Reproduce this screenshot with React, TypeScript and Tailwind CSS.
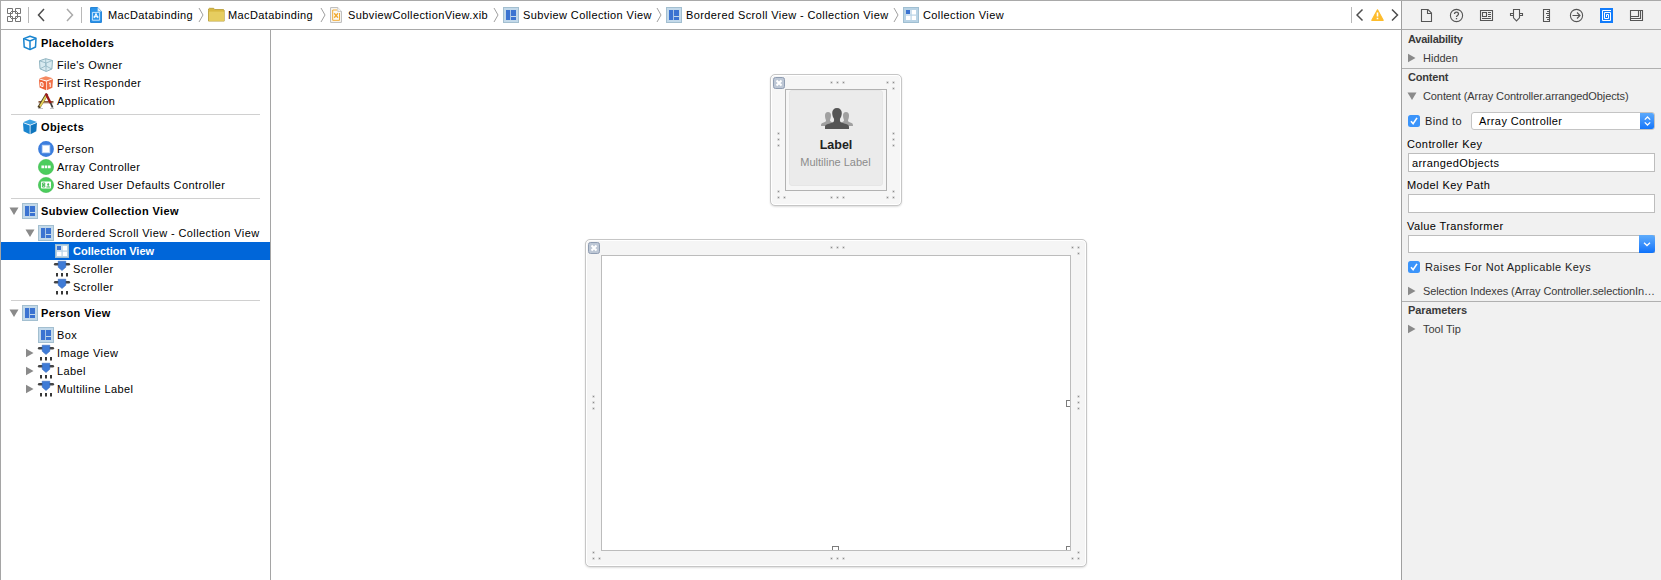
import React from "react";

type IconName =
  | "cubeOutline" | "owner" | "responder" | "app" | "cube" | "person" | "array" | "defaults"
  | "view" | "collection" | "scroller";

function ViewIcon() {
  return (
    <svg width="16" height="16" viewBox="0 0 16 16" className="shrink-0">
      <rect x=".5" y=".5" width="15" height="15" fill="#c3d9ea" stroke="#a3bfd0" />
      <rect x="3" y="3" width="4.200" height="10" fill="#3b73d1" />
      <rect x="8" y="3" width="5" height="6" fill="#3b73d1" />
      <rect x="8" y="10" width="5" height="3" fill="#3b73d1" />
    </svg>
  );
}

function CollectionIcon({ size = 14 }: { size?: 14 | 16 }) {
  const a = size === 16 ? 3 : 2;
  const b = size === 16 ? 9 : 8;
  return (
    <svg width={size} height={size} viewBox={`0 0 ${size} ${size}`} className="shrink-0">
      <rect x=".5" y=".5" width={size - 1} height={size - 1} fill="#b9d3e5" stroke="#a0bfd2" />
      <rect x={a} y={a} width="4.500" height="4.500" fill="#e4eefa" />
      <rect x={a} y={a} width="4" height="4" fill="#3b73d1" />
      <rect x={b - 0.3} y={a} width="4.300" height="4.500" fill="#fff" />
      <rect x={a} y={b - 0.3} width="4.500" height="4.300" fill="#fff" />
      <rect x={b - 0.3} y={b - 0.3} width="4.300" height="4.300" fill="#fff" />
    </svg>
  );
}

function TreeIcon({ name }: { name: IconName }) {
  if (name === "view") return <ViewIcon />;
  if (name === "collection")
    return (
      <span className="flex w-4 shrink-0 justify-center">
        <CollectionIcon />
      </span>
    );
  return (
    <svg width="16" height="16" viewBox="0 0 16 16" className="shrink-0 overflow-visible">
      {name === "cubeOutline" && (
        <g fill="none" stroke="#1a85cf" strokeWidth="1.5" strokeLinejoin="round">
          <path d="M1.7 3.6 8 1.2l6 2-.5 8.8L8 14.6 2.2 12z" />
          <path d="M1.7 3.6 8 6l6-2.6M8 6v8.4" />
        </g>
      )}
      {name === "cube" && (
        <g>
          <path d="M1 3.3 7.8.5 15 3 8.3 5.7z" fill="#3aa0e2" />
          <path d="M1 4 7.7 6.4v8.8L1.6 12.3z" fill="#1a85cf" />
          <path d="M8.5 6.4 15 3.7l-.7 8.6-5.8 2.9z" fill="#0f75bd" />
        </g>
      )}
      {name === "owner" && (
        <g fill="#d8eaf0" stroke="#8fb4c1" strokeLinejoin="round">
          <path d="M1.5 3.8 7.7 1.7l6.8 1.8-.6 8.5-5.6 2.5L2 11.8z" />
          <path d="M1.5 3.8 8 6l6.5-2.5M8 6v8.3M2 11.8l5.8-3 6 3.2M7.7 1.7v7" fill="none" strokeWidth=".8" />
        </g>
      )}
      {name === "responder" && (
        <g>
          <path d="M1 3.6 7.8 1.3l7 1.9-6.4 2.4z" fill="#f58a61" />
          <path d="M1 4.2 8 6.4v8.8l-6.4-2.6z" fill="#ee6237" />
          <path d="M8.7 6.4 15 4l-.6 8.7-5.7 2.5z" fill="#f07048" />
          <path d="M2.7 7.4 5 8v3.6l-2.300-.7zM11 8.6l1.200-.8v4.200" fill="none" stroke="#fff" strokeWidth="1" />
        </g>
      )}
      {name === "app" && (
        <g fill="none">
          <path d="M.5 8.500h15M.5 9.700h15" stroke="#8a5a3c" strokeWidth="1.100" />
          <path d="M.7 14.8 9 1" stroke="#4a3b20" strokeWidth="3" />
          <path d="M2 13.400 8.400 2.600" stroke="#e6d25a" strokeWidth="1.900" />
          <path d="m7.800.6 4.900 9.600" stroke="#9c1a1c" strokeWidth="2.400" />
          <path d="m12.600 10 2 4.500" stroke="#3d3d3d" strokeWidth="1.800" />
          <path d="M0 15.500h5m7 0h4" stroke="#b5b5b5" strokeWidth=".8" />
        </g>
      )}
      {name === "person" && (
        <g>
          <circle cx="8" cy="8" r="7.9" fill="#3b7ddd" />
          <rect x="4.200" y="4.200" width="7.600" height="7.600" fill="#fff" stroke="#bcd4f5" strokeWidth=".8" />
        </g>
      )}
      {name === "array" && (
        <g>
          <circle cx="8" cy="8" r="7.600" fill="#4ccd5d" stroke="#3cbb4e" strokeWidth=".6" />
          <path d="M3.400 6.600h2.600v2.600H3.400zM6.700 6.600h2.600v2.600H6.700zM10 6.600h2.600v2.600H10z" fill="#fff" />
        </g>
      )}
      {name === "defaults" && (
        <g>
          <circle cx="8" cy="8" r="7.600" fill="#4ccd5d" stroke="#3cbb4e" strokeWidth=".6" />
          <rect x="3" y="4.400" width="10" height="7.200" rx=".8" fill="#fff" />
          <path d="M4.400 6h2.400v1.600H4.400zM4.400 8.400h2.400V10H4.400zM8.400 10h3.800M10.200 6v3.600M9.200 7.600h2" fill="none" stroke="#35b548" strokeWidth=".9" />
        </g>
      )}
      {name === "scroller" && (
        <g>
          <path d="M1.200 3.200h13.600" stroke="#454545" strokeWidth="2.600" strokeLinecap="round" />
          <path d="M4.200.2h7.600v6L8 9.600 4.200 6.200z" fill="#3f7bd6" stroke="#2d62b8" strokeWidth=".5" />
          <path d="M2 12h2v3.500H2zM7 12h2v3.500H7zM12 12h2v3.500h-2z" fill="#383838" />
        </g>
      )}
    </svg>
  );
}

function Triangle({ open }: { open: boolean }) {
  return (
    <svg width="10" height="10" viewBox="0 0 10 10" className="shrink-0" fill="#8a8a8a">
      {open ? <path d="M.5 1.500h9L5 9z" /> : <path d="M1 .7v8.600L8.500 5z" />}
    </svg>
  );
}

type RowData = { icon: IconName; text: string; level?: number; arrow?: "open" | "closed"; selected?: boolean };

function TreeRow({ icon, text, level = 1, arrow, selected }: RowData) {
  return (
    <div
      className={`flex h-[18px] items-center whitespace-nowrap ${level === 2 ? "pl-[37px]" : "pl-[21px]"} ${
        selected ? "bg-[#0066d9] font-bold text-white" : "text-black"
      }`}
    >
      <span className="flex w-4 shrink-0 items-center pl-[3px]">{arrow && <Triangle open={arrow === "open"} />}</span>
      <TreeIcon name={icon} />
      <span className={`ml-[3px] ${selected ? "tracking-[0px]" : "tracking-[0.4px]"}`}>{text}</span>
    </div>
  );
}

function Group({ title, icon, arrow, rows }: { title: string; icon: IconName; arrow?: boolean; rows: RowData[] }) {
  return (
    <section className="pb-1">
      <div className="mb-px flex h-6 items-center pl-2 font-bold">
        <span className="w-[13px] shrink-0">{arrow && <Triangle open />}</span>
        <TreeIcon name={icon} />
        <span className="ml-[3px] tracking-[0.4px]">{title}</span>
      </div>
      {rows.map((r, i) => (
        <TreeRow key={i} {...r} />
      ))}
    </section>
  );
}

const Separator = () => <div className="mx-[10px] h-px bg-[#d0d0d0]" />;

function Sidebar() {
  return (
    <nav className="w-[271px] shrink-0 border-r border-l border-[#a5a5a5] bg-white pt-px">
      <Group
        title="Placeholders"
        icon="cubeOutline"
        rows={[
          { icon: "owner", text: "File's Owner" },
          { icon: "responder", text: "First Responder" },
          { icon: "app", text: "Application" },
        ]}
      />
      <Separator />
      <Group
        title="Objects"
        icon="cube"
        rows={[
          { icon: "person", text: "Person" },
          { icon: "array", text: "Array Controller" },
          { icon: "defaults", text: "Shared User Defaults Controller" },
        ]}
      />
      <Separator />
      <Group
        title="Subview Collection View"
        icon="view"
        arrow
        rows={[
          { icon: "view", text: "Bordered Scroll View - Collection View", arrow: "open" },
          { icon: "collection", text: "Collection View", level: 2, selected: true },
          { icon: "scroller", text: "Scroller", level: 2 },
          { icon: "scroller", text: "Scroller", level: 2 },
        ]}
      />
      <Separator />
      <Group
        title="Person View"
        icon="view"
        arrow
        rows={[
          { icon: "view", text: "Box" },
          { icon: "scroller", text: "Image View", arrow: "closed" },
          { icon: "scroller", text: "Label", arrow: "closed" },
          { icon: "scroller", text: "Multiline Label", arrow: "closed" },
        ]}
      />
    </nav>
  );
}

function Crumb({ icon, text, width, iconWidth, last }: { icon: React.ReactNode; text: string; width: string; iconWidth: string; last?: boolean }) {
  return (
    <div className={`flex shrink-0 items-center whitespace-nowrap ${width}`}>
      <span className={`flex shrink-0 items-center justify-start ${iconWidth}`}>{icon}</span>
      <span className="w-0 grow tracking-[0.4px]">{text}</span>
      {!last && (
        <svg width="6" height="16" viewBox="0 0 6 16" className="mr-1 shrink-0" fill="none" stroke="#a0a0a0">
          <path d="M1 1 5 8 1 15" />
        </svg>
      )}
    </div>
  );
}

function DocIcon({ kind }: { kind: "project" | "xib" }) {
  const project = kind === "project";
  return (
    <svg width="12" height="16" viewBox="0 0 12 16" className="shrink-0">
      <path
        d="M.6.6h7.200l3.600 3.800v11H.6z"
        fill={project ? "#2c94ea" : "#fcfaf5"}
        stroke={project ? "#1b7fd6" : "#b9b9b9"}
        strokeWidth="1"
      />
      <path d="M7.800.6v3.800h3.600" fill="#fff" stroke={project ? "#7dbcf0" : "#b9b9b9"} strokeWidth=".8" />
      {project ? (
        <g>
          <path d="M2.400 5.400h7.200v7.800H2.400z" fill="none" stroke="#d9edff" strokeWidth=".9" />
          <path d="M4 11 6 6.800 8 11M3.600 9.700h4.800" stroke="#fff" strokeWidth="1.100" fill="none" />
        </g>
      ) : (
        <g fill="none" stroke="#f0ab35">
          <path d="M7 3H2.700v10.300h6.800V6" />
          <path d="m4.200 6.300 3.800 4.400M8 6.300l-3.800 4.400" strokeWidth="1.400" />
        </g>
      )}
    </svg>
  );
}

function FolderIcon() {
  return (
    <svg width="17" height="16" viewBox="0 0 17 16" className="shrink-0">
      <path d="M.5 3.200V2l.8-.7h4.400l1 1.200h8.800l.7.8v10.800H.5z" fill="#d9b941" stroke="#b59a35" strokeWidth=".8" />
      <path d="M1 4.600h15v9.300H1z" fill="#e6cd60" />
    </svg>
  );
}

function Chevron({ d, color }: { d: string; color: string }) {
  return (
    <svg width="8" height="14" viewBox="0 0 8 14" className="shrink-0" fill="none" stroke={color} strokeWidth="1.500">
      <path d={d} />
    </svg>
  );
}

function JumpBar() {
  return (
    <div className="flex h-[29px] w-[1401px] shrink-0 items-center border-b border-l border-[#a9a9a9] bg-white">
      <svg width="14" height="14" viewBox="0 0 14 14" className="ml-[6px] shrink-0" fill="none" stroke="#757575">
        <path d="M.5.5h5v5h-5zM8.500.5h5v5h-5zM.5 8.500h5v5h-5zM8.500 8.500h5v5h-5zM4 3.500h6M4 10.500h6M3.500 4v6M10.500 4v6" />
      </svg>
      <div className="ml-[7px] h-4 w-px bg-[#b8b8b8]" />
      <div className="ml-2"><Chevron d="M7 1 1.500 7 7 13" color="#4d4d4d" /></div>
      <div className="ml-[21px]"><Chevron d="M1 1l5.500 6L1 13" color="#aaaaaa" /></div>
      <div className="mr-2 ml-[7px] h-4 w-px bg-[#b8b8b8]" />
      <div className="flex grow items-center">
        <Crumb width="w-[118px]" iconWidth="w-[18px]" icon={<DocIcon kind="project" />} text="MacDatabinding" />
        <Crumb width="w-[122px]" iconWidth="w-5" icon={<FolderIcon />} text="MacDatabinding" />
        <Crumb width="w-[173px]" iconWidth="w-[18px]" icon={<DocIcon kind="xib" />} text="SubviewCollectionView.xib" />
        <Crumb width="w-[163px]" iconWidth="w-5" icon={<ViewIcon />} text="Subview Collection View" />
        <Crumb width="w-[237px]" iconWidth="w-5" icon={<ViewIcon />} text="Bordered Scroll View - Collection View" />
        <Crumb width="w-[120px]" iconWidth="w-5" icon={<CollectionIcon size={16} />} text="Collection View" last />
      </div>
      <div className="h-4 w-px bg-[#b8b8b8]" />
      <div className="flex w-[49px] items-center pl-1">
        <svg width="8" height="14" viewBox="0 0 8 14" fill="none" stroke="#4d4d4d" strokeWidth="1.500"><path d="M6.500 1.500 1 7l5.500 5.500" /></svg>
        <svg width="13" height="12" viewBox="0 0 13 12" className="ml-[7px]">
          <path d="M6.500.8 12.200 11.300H.8z" fill="#fdbc2c" stroke="#fdbc2c" strokeWidth="1.200" strokeLinejoin="round" />
          <path d="M6.500 3.500v4M6.500 8.800v1.400" stroke="#fff" strokeWidth="1.600" />
        </svg>
        <svg width="8" height="14" viewBox="0 0 8 14" className="ml-[7px]" fill="none" stroke="#4d4d4d" strokeWidth="1.500"><path d="M1 1.500 6.500 7 1 12.500" /></svg>
      </div>
    </div>
  );
}

function Grips({ points }: { points: number[][] }) {
  return (
    <svg className="pointer-events-none absolute -top-px -left-px h-[calc(100%+2px)] w-[calc(100%+2px)]">
      {points.map(([x, y], i) => (
        <g key={i}>
          <rect x={x - 1} y={y - 1} width="3" height="3" rx="1" fill="#dadada" />
          <rect x={x} y={y} width="1" height="1" fill="#8c8c8c" />
        </g>
      ))}
    </svg>
  );
}

function gripPoints(cx: number, cy: number, left: number, top: number, right: number, bottom: number) {
  return [
    [cx - 6, top], [cx, top], [cx + 6, top],
    [cx - 6, bottom], [cx, bottom], [cx + 6, bottom],
    [left, cy - 6], [left, cy], [left, cy + 6],
    [right, cy - 6], [right, cy], [right, cy + 6],
    [right - 6, top], [right, top], [right, top + 6],
    [right - 6, bottom], [right, bottom], [right, bottom - 6],
    [left + 6, bottom], [left, bottom], [left, bottom - 6],
  ];
}

function CloseBadge() {
  return (
    <svg width="12" height="12" viewBox="0 0 12 12" className="absolute top-[2px] left-[2px]">
      <rect x=".5" y=".5" width="11" height="11" rx="2" fill="#bdc7d5" stroke="#8f9db2" />
      <path d="m3.500 3.500 5 5M8.500 3.500l-5 5" stroke="#fff" strokeWidth="2" />
    </svg>
  );
}

function People() {
  return (
    <svg width="32" height="22" viewBox="0 0 32 22" className="ml-[2px] shrink-0">
      <g fill="#a0a0a0">
        <path d="M7 4c2 0 3 1.400 3 3.500S9.200 11 9 12.200c0 1 1 1.500 3 2.300V18H0c0-2 .3-2.600 2-3.200 2.200-.8 3-1.200 3-2.600-.5-1-1-2.700-1-4.700S5 4 7 4z" />
        <path d="M25 4c-2 0-3 1.400-3 3.500s.8 3.500 1 4.700c0 1-1 1.500-3 2.300V18h12c0-2-.3-2.600-2-3.200-2.200-.8-3-1.200-3-2.600.5-1 1-2.700 1-4.700S27 4 25 4z" />
      </g>
      <path d="M16 0c3 0 4.800 2 4.800 5 0 2.600-1 4.500-1.800 5.800-.3 2.400.2 3.400 2 4 4.500 1.400 7 1.600 7 4.200v2H4v-2c0-2.600 2.500-2.800 7-4.200 1.800-.6 2.300-1.600 2-4C12.200 9.500 11.200 7.600 11.200 5c0-3 1.800-5 4.800-5z" fill="#555" />
    </svg>
  );
}

function Canvas() {
  return (
    <main className="flex grow flex-col items-center bg-white pt-[44px]">
      <div className="relative h-[132px] w-[132px] rounded-[5px] border border-[#c6c6c6] bg-[#f6f6f6] p-[14px] shadow-[inset_0_0_0_1px_#fff,0_1px_2px_#0002]">
        <div className="flex h-[102px] w-[102px] justify-center border border-[#b2b2b2] bg-[#f6f6f6]">
          <div className="flex h-24 w-[94px] flex-col items-center rounded-[3px] border border-[#e6e6e6] bg-[#ebebeb] pt-[17px]">
            <People />
            <div className="mt-[7px] text-[12.5px] leading-4 font-bold text-[#222]">Label</div>
            <div className="mt-px mr-px text-[11px] leading-4 whitespace-nowrap text-[#8b8b8b]">Multiline Label</div>
          </div>
        </div>
        <Grips points={gripPoints(67, 65, 8, 8, 123, 123)} />
        <CloseBadge />
      </div>
      <div className="relative mt-[33px] h-[328px] w-[502px] rounded-[5px] border border-[#c6c6c6] bg-[#f5f5f5] p-[15px] shadow-[inset_0_0_0_1px_#fff,0_1px_2px_#0002]">
        <div className="relative h-[296px] w-[470px] overflow-hidden border border-[#bcbcbc] bg-white">
          <span className="absolute top-[144px] -right-[3px] size-[7px] border border-[#7c7c7c]" />
          <span className="absolute -bottom-[3px] left-[230px] size-[7px] border border-[#7c7c7c]" />
          <span className="absolute -right-[3px] -bottom-[3px] size-[7px] border border-[#7c7c7c]" />
        </div>
        <Grips points={gripPoints(252, 163, 8, 8, 493, 319)} />
        <CloseBadge />
      </div>
    </main>
  );
}

function InspectorTabs() {
  const c = "flex w-[30px] items-center justify-center";
  const svg = { width: 15, height: 15, viewBox: "0 0 15 15", fill: "none", stroke: "#555", strokeWidth: 1.1, className: "relative left-[0.5px]" };
  return (
    <div className="flex h-[29px] items-center border-b border-[#a9a9a9] pl-[9px]">
      <span className={c}><svg {...svg}><path d="M2.500 1.500h6.500l3.500 3.500v8.500h-10zM8.500 1.500V5.500h4" /></svg></span>
      <span className={c}><svg {...svg}><circle cx="7.500" cy="7.500" r="6.100" /><path d="M5.500 6c0-2.600 4-2.600 4 0 0 1.500-2 1.500-2 3M7.500 10v1.300" strokeWidth="1.300" /></svg></span>
      <span className={c}><svg {...svg}><path d="M1.500 2.500h12v10h-12zM3.500 4.500h4v4h-4zM9 4.500h3M9 6.500h3M9 8.500h3M3 10.500h9" /></svg></span>
      <span className={c}><svg {...svg}><path d="M4.500 1.500h6v8.300l-3 3.200-3-3.200zM4.500 5.500h-3v2h3M10.500 5.500h3v2h-3" /></svg></span>
      <span className={c}><svg {...svg}><path d="M4.500 1.500h6v12h-6zM10.500 3.500h-2.500M10.500 5.500h-3.500M10.500 7.500h-2.500M10.500 9.500h-3.500M10.500 11.500h-2.500" /></svg></span>
      <span className={c}><svg {...svg}><circle cx="7.500" cy="7.500" r="6.100" /><path d="M3.500 7.500h7.500M8 4.500l3 3-3 3" /></svg></span>
      <span className={c}>
        <span className="flex h-[15px] w-[13px] items-center justify-center bg-[#127cfb]">
          <svg width="13" height="15" viewBox="0 0 13 15" fill="none" stroke="#fff">
            <path d="M11 2.500H2.500v10h8v-8h-6v6h4v-4H6.500v2.500" />
          </svg>
        </span>
      </span>
      <span className={c}><svg {...svg}><path d="M1.500 2.500h12v10h-12zM1.500 8.500h8v-6M1.500 10.500h10v-8" /></svg></span>
    </div>
  );
}

function Checkbox() {
  return (
    <svg width="12" height="12" viewBox="0 0 12 12" className="shrink-0">
      <rect width="12" height="12" rx="2.500" fill="#3b94fa" />
      <path d="m3 6.300 2.100 2.400L9 2.900" fill="none" stroke="#fff" strokeWidth="1.600" />
    </svg>
  );
}

function Disclosure({ text, open = false, tracking }: { text: string; open?: boolean; tracking: string }) {
  return (
    <div className="flex h-[18px] items-center text-[#3a3a3a]">
      <span className="-ml-px w-4 shrink-0"><Triangle open={open} /></span>
      <span className={`whitespace-nowrap ${tracking}`}>{text}</span>
    </div>
  );
}

function Inspector() {
  return (
    <aside className="flex w-[260px] shrink-0 flex-col border-l border-[#a0a0a0] bg-[#f1f1f1]">
      <InspectorTabs />
      <div className="flex h-[38px] flex-col pl-[6px]">
        <div className="h-[19px] leading-[19px] font-bold tracking-[-0.25px] text-[#3a3a3a]">Availability</div>
        <Disclosure text="Hidden" tracking="tracking-[0px]" />
      </div>
      <div className="h-px bg-[#b0b0b0]" />
      <div className="flex h-[232px] flex-col px-[6px]">
        <div className="h-[18px] leading-4 font-bold tracking-[-0.2px] text-[#3a3a3a]">Content</div>
        <Disclosure text="Content (Array Controller.arrangedObjects)" open tracking="tracking-[-0.1px]" />
        <div className="mt-[7px] flex h-[18px] items-center">
          <Checkbox />
          <span className="ml-[5px] w-[46px] tracking-[0.4px] text-[#1c1c1c]">Bind to</span>
          <div className="flex h-[18px] grow items-center overflow-hidden rounded-[3px] border border-[#c4c4c4] bg-white">
            <span className="grow pl-[7px] tracking-[0.4px]">Array Controller</span>
            <span className="-my-px -mr-px flex h-[18px] w-[15px] items-center justify-center bg-linear-to-b from-[#5facfb] to-[#0a72fb]">
              <svg width="7" height="10" viewBox="0 0 7 10" fill="none" stroke="#fff" strokeWidth="1.300"><path d="M.8 3.600 3.500 1l2.700 2.600M.8 6.400 3.500 9l2.700-2.600" /></svg>
            </span>
          </div>
        </div>
        <div className="mt-[6px] -ml-px h-[17px] leading-[17px] tracking-[0.4px]">Controller Key</div>
        <div className="h-[19px] border border-[#bdbdbd] bg-white pl-[3px] leading-[18px] tracking-[0.4px]">arrangedObjects</div>
        <div className="mt-[5px] -ml-px h-[17px] leading-[17px] tracking-[0.4px]">Model Key Path</div>
        <div className="h-[19px] border border-[#bdbdbd] bg-white" />
        <div className="mt-[5px] -ml-px h-[17px] leading-[17px] tracking-[0.4px]">Value Transformer</div>
        <div className="flex h-[18px] justify-end border border-[#bdbdbd] bg-white">
          <span className="-my-px -mr-px flex h-[18px] w-4 items-center justify-center rounded-r-[3px] bg-linear-to-b from-[#5facfb] to-[#0a72fb]">
            <svg width="8" height="5" viewBox="0 0 8 5" fill="none" stroke="#fff" strokeWidth="1.300"><path d="m1 .8 3 2.800L7 .8" /></svg>
          </span>
        </div>
        <div className="mt-[6px] flex h-4 items-center">
          <Checkbox />
          <span className="ml-[5px] tracking-[0.4px] text-[#1c1c1c]">Raises For Not Applicable Keys</span>
        </div>
        <div className="mt-[7px]">
          <Disclosure text="Selection Indexes (Array Controller.selectionIn…" tracking="tracking-[-0.1px]" />
        </div>
      </div>
      <div className="h-px bg-[#b0b0b0]" />
      <div className="pl-[6px]">
        <div className="h-[18px] leading-4 font-bold tracking-[-0.1px] text-[#3a3a3a]">Parameters</div>
        <Disclosure text="Tool Tip" tracking="tracking-[0px]" />
      </div>
    </aside>
  );
}

export default function App() {
  return (
    <div className="flex h-[580px] w-[1661px] overflow-hidden border-t border-[#a9a9a9] bg-white font-['Liberation_Sans',Arial,sans-serif] text-[11px] leading-4 text-black">
      <div className="flex w-[1401px] flex-col">
        <JumpBar />
        <div className="flex min-h-0 grow">
          <Sidebar />
          <Canvas />
        </div>
      </div>
      <Inspector />
    </div>
  );
}
